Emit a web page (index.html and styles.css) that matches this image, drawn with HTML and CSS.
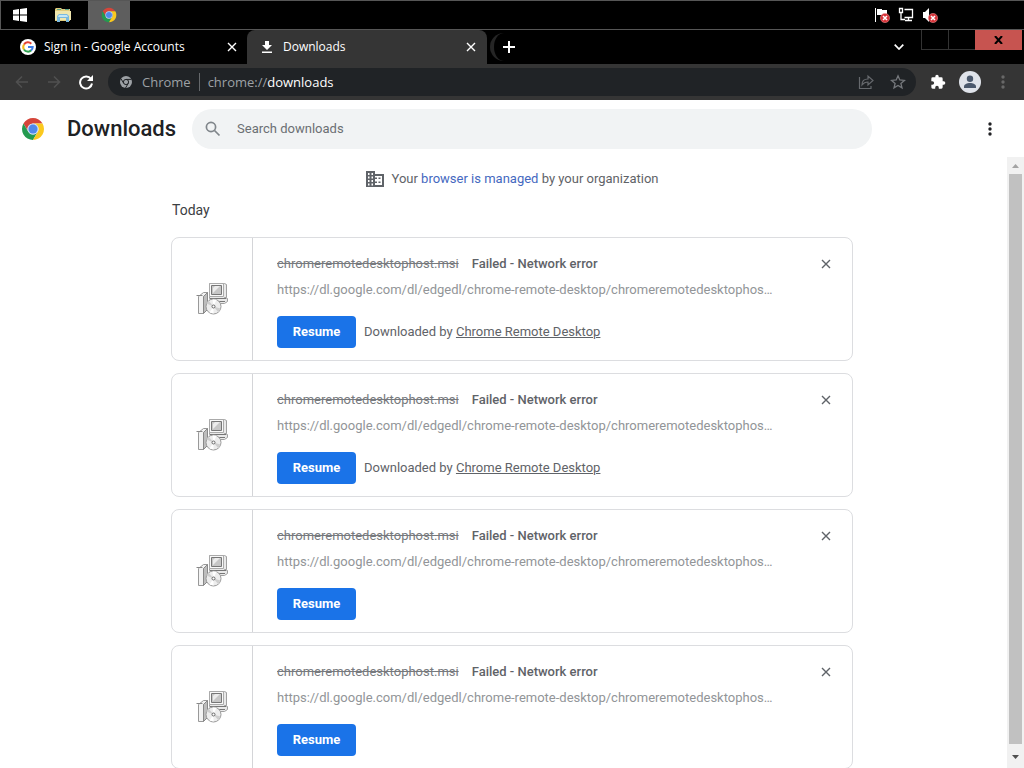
FILE: index.html
```
<!DOCTYPE html>
<html lang="en">
<head>
<meta charset="utf-8">
<title>Downloads</title>
<link rel="stylesheet" href="styles.css">
</head>
<body>
<svg class="defs" aria-hidden="true">
  <symbol id="chrome" viewBox="0 0 48 48">
    <path fill="#d5453a" d="M4.95 13A22 22 0 0 1 43.05 13L24 13A11 11 0 0 0 14.47 29.5Z"/>
    <path fill="#249a50" d="M4.95 13L14.47 29.5A11 11 0 0 0 33.53 29.5L24 46A22 22 0 0 1 4.95 13Z"/>
    <path fill="#fbc91f" d="M43.05 13A22 22 0 0 1 24 46L33.53 29.5A11 11 0 0 0 24 13Z"/>
    <circle cx="24" cy="24" r="11" fill="#c9d8f5"/>
    <circle cx="24" cy="24" r="9" fill="#5089ea"/>
  </symbol>
  <symbol id="close" viewBox="0 0 10 10">
    <path d="M1 1L9 9M9 1L1 9" fill="none" stroke="currentColor" stroke-width="1.4"/>
  </symbol>
  <symbol id="dots" viewBox="0 0 4 14">
    <circle cx="2" cy="2" r="1.7"/><circle cx="2" cy="7" r="1.7"/><circle cx="2" cy="12" r="1.7"/>
  </symbol>
  <symbol id="muted" viewBox="0 0 10 10">
    <circle cx="5" cy="5" r="4.6" fill="#d8343a" stroke="#e98a8c" stroke-width=".6"/>
    <path d="M3 3L7 7M7 3L3 7" stroke="#fff" stroke-width="1.5"/>
  </symbol>
  <symbol id="installer" viewBox="0 0 32 34">
    <path fill="#e9e9e9" stroke="#a0a0a0" d="M13.500 1.500h15l2 1v13h-2l3 1v3l-3 2h-12l-3-5z"/>
    <path fill="#f8f8f8" stroke="#aaa" d="M13.500 1.500h14v13h-14z"/>
    <path fill="#c6c6c6" stroke="#777" d="M15.500 3.500h10v9h-10z"/>
    <path fill="#ececec" d="M17 11l7-7h-5l-2 2z"/>
    <path stroke="#777" d="M14 16.500h16M22 19.500h7"/>
    <path fill="#f3f3f3" stroke="#999" d="M2.500 14.500l5-4h4l-4 4v17h-5z"/>
    <path fill="#bdbdbd" stroke="#888" d="M7.500 14.500l4-4v17l-4 4z"/>
    <path fill="none" stroke="#888" d="M.5 13.500h6"/>
    <circle cx="17.500" cy="24.500" r="7.500" fill="#ededed" stroke="#9a9a9a"/>
    <path fill="#cecece" d="M17.500 24.500l-7-3 2-3zM17.500 24.500l7 2-2 4z"/>
    <path fill="#fff" d="M17.500 24.500l-1-7h4zM17.500 24.500l-4 6 4 1z"/>
    <circle cx="17.500" cy="24.500" r="1.500" fill="#fff" stroke="#666"/>
  </symbol>
</svg>

<header class="taskbar">
  <button class="task" aria-label="Start">
    <svg width="14" height="14" viewBox="0 0 14 14" fill="#fff"><path d="M0 2l6-.9V6.500H0zM7 1l7-1v6.500H7zM0 7.500h6v5.400L0 12zM7 7.500h7V14l-7-1z"/></svg>
  </button>
  <button class="task" aria-label="File Explorer">
    <svg width="18" height="16" viewBox="0 0 18 16">
      <path fill="#e0cb7c" d="M1 2l1-1h5l1 1h8v12H1z"/>
      <path fill="#58a48c" d="M3 2h4v1H3zM11 2h4v1h-4z"/>
      <path fill="#efe6ae" d="M1 4h16v9H1z"/>
      <path fill="#79b9df" d="M3 15V9l2-2h8l2 2v6h-3v-4H6v4z"/>
      <path fill="#c4e6f6" d="M5 8h8l1 2H4z"/>
    </svg>
  </button>
  <button class="task task-active" aria-label="Google Chrome"><svg width="16" height="16"><use href="#chrome"/></svg></button>
  <div class="tray">
    <svg width="16" height="16" viewBox="0 0 16 16"><path fill="#fff" d="M1 1h1v14H1zM3 2h5v1h5v6H8V8H3z"/><use href="#muted" x="6" y="6" width="10" height="10"/></svg>
    <svg width="16" height="16" viewBox="0 0 16 16" fill="none" stroke="#fff"><path d="M1.500 1.500h3v4h-3zM3 6v6.500h4M6.500 2.500h8v8h-8M10.500 11v2M7 13.500h7" stroke-width="1.300"/></svg>
    <svg width="16" height="16" viewBox="0 0 16 16"><path fill="#fff" d="M1 5h2l4-4v14l-4-4H1z"/><use href="#muted" x="6" y="6" width="10" height="10"/></svg>
  </div>
</header>

<div class="tabstrip">
  <div class="tab">
    <svg width="16" height="16" viewBox="0 0 16 16"><circle cx="8" cy="8" r="8" fill="#fff"/><g fill="none" stroke-width="2"><path stroke="#e34133" d="M4 5.500A4.700 4.700 0 0 1 11.300 4.700"/><path stroke="#f5b916" d="M4 5.400A5 5 0 0 0 4 10.600"/><path stroke="#2fa150" d="M4 10.400A4.700 4.700 0 0 0 11.300 11.300"/><path stroke="#3f7de8" d="M8 8h4.700A4.700 4.700 0 0 1 11.100 11.500"/></g></svg>
    <span class="tab-title">Sign in - Google Accounts</span>
    <button class="icon-btn" aria-label="Close tab"><svg width="10" height="10"><use href="#close"/></svg></button>
  </div>
  <div class="tab tab-current">
    <svg width="16" height="16" viewBox="0 0 16 16" fill="#fff"><path d="M6 2h4v4h3L8 11 3 6h3zM3 12.500h10V14H3z"/></svg>
    <span class="tab-title">Downloads</span>
    <button class="icon-btn" aria-label="Close tab"><svg width="10" height="10"><use href="#close"/></svg></button>
  </div>
  <button class="new-tab" aria-label="New tab"><svg width="12" height="12" viewBox="0 0 12 12"><path d="M6 0v12M0 6h12" stroke="#fff" stroke-width="2"/></svg></button>
  <button class="icon-btn tab-search" aria-label="Search tabs"><svg width="10" height="6" viewBox="0 0 10 6" fill="none" stroke="#fff" stroke-width="1.700"><path d="M.7.7L5 5 9.300.7"/></svg></button>
  <div class="window-controls">
    <button aria-label="Minimize"></button>
    <button aria-label="Maximize"></button>
    <button class="window-close" aria-label="Close"><svg width="9" height="8" viewBox="0 0 9 8"><path d="M1 0L8 8M8 0L1 8" stroke="#000" stroke-width="2"/></svg></button>
  </div>
</div>

<nav class="toolbar">
  <button class="icon-btn nav-btn" aria-label="Back"><svg width="14" height="14" viewBox="0 0 14 14" fill="none" stroke="#505050" stroke-width="1.600"><path d="M13 7H2M7 1.500L1.500 7 7 12.500"/></svg></button>
  <button class="icon-btn nav-btn" aria-label="Forward"><svg width="14" height="14" viewBox="0 0 14 14" fill="none" stroke="#505050" stroke-width="1.600"><path d="M1 7h11M7 1.500L12.500 7 7 12.500"/></svg></button>
  <button class="icon-btn nav-btn" aria-label="Reload"><svg width="16" height="16" viewBox="0 0 16 16"><path d="M13 5A6 6 0 1 0 14 9.500" fill="none" stroke="#fff" stroke-width="2"/><path d="M15 1v6H9z" fill="#fff"/></svg></button>
  <div class="omnibox">
    <svg width="12" height="12" viewBox="0 0 12 12"><circle cx="6" cy="6" r="6" fill="#9da1a5"/><circle cx="6" cy="6" r="2.600" fill="none" stroke="#202326"/><path d="M6 3.400h5.500M3.700 7.300L1 2.800M8.300 7.300L5.500 12" stroke="#202326"/></svg>
    <span class="origin">Chrome</span>
    <span class="url">chrome://<b>downloads</b></span>
    <button class="icon-btn" aria-label="Share"><svg width="16" height="16" viewBox="0 0 16 16" fill="none" stroke="#66696d" stroke-width="1.200"><path d="M1.500 3v11.500H13V12M4 11c0-4 2-6 6-6V2l5 4.500-5 4.500V8C7 8 5.500 9 4 11z"/></svg></button>
    <button class="icon-btn" aria-label="Bookmark"><svg width="16" height="16" viewBox="0 0 16 16" fill="none" stroke="#75787c" stroke-width="1.300"><path d="M8 1.800l1.800 4.200 4.600.4-3.500 3 1.100 4.500L8 11.500l-4 2.400 1.100-4.500-3.500-3 4.600-.4z"/></svg></button>
  </div>
  <button class="icon-btn" aria-label="Extensions"><svg width="16" height="16" viewBox="0 0 24 24" fill="#fff"><path d="M20.500 11H19V7a2 2 0 0 0-2-2h-4V3.500a2.500 2.500 0 0 0-5 0V5H4a2 2 0 0 0-2 2v3.800h1.500a2.700 2.700 0 0 1 0 5.400H2V20a2 2 0 0 0 2 2h3.800v-1.500a2.700 2.700 0 0 1 5.400 0V22H17a2 2 0 0 0 2-2v-4h1.500a2.500 2.500 0 0 0 0-5z"/></svg></button>
  <button class="icon-btn" aria-label="Profile"><svg width="22" height="22" viewBox="0 0 22 22"><circle cx="11" cy="11" r="11" fill="#dfe3ea"/><circle cx="11" cy="7.700" r="3.200" fill="#4b596d"/><path d="M5 17v-1.500c0-2.300 3-3.500 6-3.500s6 1.200 6 3.500V17z" fill="#4b596d"/></svg></button>
  <button class="icon-btn toolbar-menu" aria-label="Menu"><svg width="4" height="14"><use href="#dots"/></svg></button>
</nav>

<main class="page">
  <div class="page-header">
    <svg width="24" height="24"><use href="#chrome"/></svg>
    <h1>Downloads</h1>
    <label class="search">
      <svg width="16" height="16" viewBox="0 0 16 16" fill="none" stroke="#80868b" stroke-width="1.700"><circle cx="6" cy="6" r="4.600"/><path d="M9.500 9.500l5 5"/></svg>
      <input type="search" placeholder="Search downloads" aria-label="Search downloads">
    </label>
    <button class="icon-btn more" aria-label="More actions"><svg width="4" height="14"><use href="#dots"/></svg></button>
  </div>

  <div class="scroll-area">
    <div class="content">
      <p class="managed">
        <svg width="18" height="16" viewBox="0 0 18 16"><path fill="#5f6368" d="M0 0h9v3h9v13H0z"/><path fill="#fff" d="M2 2h1.500v2H2zM5.500 2H7v2H5.500zM2 5.500h1.500v2H2zM5.500 5.500H7v2H5.500zM2 9h1.500v2H2zM5.500 9H7v2H5.500zM2 12.500h1.500v2H2zM5.500 12.500H7v2H5.500zM9 5h7v9H9z"/><path fill="#5f6368" d="M9 6.500h2V8H9zM12.500 6.500h2V8h-2zM9 10.500h2V12H9zM12.500 10.500h2V12h-2z"/></svg>
        <span>Your <a href="#">browser is managed</a> by your organization</span>
      </p>
      <h2>Today</h2>
      <article class="card">
        <div class="file-icon"><svg width="32" height="34"><use href="#installer"/></svg></div>
        <div class="details">
          <div class="title"><s>chromeremotedesktophost.msi</s><strong>Failed - Network error</strong></div>
          <div class="source">https://dl.google.com/dl/edgedl/chrome-remote-desktop/chromeremotedesktophos…</div>
          <div class="actions"><button class="resume">Resume</button><span>Downloaded by <a href="#">Chrome Remote Desktop</a></span></div>
        </div>
        <button class="icon-btn remove" aria-label="Remove from list"><svg width="10" height="10"><use href="#close"/></svg></button>
      </article>
      <article class="card">
        <div class="file-icon"><svg width="32" height="34"><use href="#installer"/></svg></div>
        <div class="details">
          <div class="title"><s>chromeremotedesktophost.msi</s><strong>Failed - Network error</strong></div>
          <div class="source">https://dl.google.com/dl/edgedl/chrome-remote-desktop/chromeremotedesktophos…</div>
          <div class="actions"><button class="resume">Resume</button><span>Downloaded by <a href="#">Chrome Remote Desktop</a></span></div>
        </div>
        <button class="icon-btn remove" aria-label="Remove from list"><svg width="10" height="10"><use href="#close"/></svg></button>
      </article>
      <article class="card">
        <div class="file-icon"><svg width="32" height="34"><use href="#installer"/></svg></div>
        <div class="details">
          <div class="title"><s>chromeremotedesktophost.msi</s><strong>Failed - Network error</strong></div>
          <div class="source">https://dl.google.com/dl/edgedl/chrome-remote-desktop/chromeremotedesktophos…</div>
          <div class="actions"><button class="resume">Resume</button></div>
        </div>
        <button class="icon-btn remove" aria-label="Remove from list"><svg width="10" height="10"><use href="#close"/></svg></button>
      </article>
      <article class="card">
        <div class="file-icon"><svg width="32" height="34"><use href="#installer"/></svg></div>
        <div class="details">
          <div class="title"><s>chromeremotedesktophost.msi</s><strong>Failed - Network error</strong></div>
          <div class="source">https://dl.google.com/dl/edgedl/chrome-remote-desktop/chromeremotedesktophos…</div>
          <div class="actions"><button class="resume">Resume</button></div>
        </div>
        <button class="icon-btn remove" aria-label="Remove from list"><svg width="10" height="10"><use href="#close"/></svg></button>
      </article>
    </div>
    <div class="scrollbar" aria-hidden="true">
      <svg width="17" height="17" viewBox="0 0 17 17"><path d="M5 11l3.500-4 3.500 4z" fill="#a3a3a3"/></svg>
      <div class="thumb"></div>
      <svg class="arrow-down" width="17" height="17" viewBox="0 0 17 17"><path d="M5 7h7l-3.500 4z" fill="#505050"/></svg>
    </div>
  </div>
</main>
</body>
</html>
```

FILE: styles.css
```
* { box-sizing: border-box; }

body {
  margin: 0;
  height: 100vh;
  display: flex;
  flex-direction: column;
  overflow: hidden;
  background: #fff;
  color: #5f6368;
  font: 13px/20px Roboto, sans-serif;
}

svg { display: block; flex: none; }
.defs { position: absolute; width: 0; height: 0; }

button {
  border: 0;
  padding: 0;
  background: none;
  font: inherit;
}

.icon-btn {
  display: grid;
  place-items: center;
  flex: none;
  color: inherit;
}

/* Taskbar */
.taskbar {
  flex: none;
  display: flex;
  height: 30px;
  background: #000;
  border: 1px solid #565656;
  border-right: 0;
}
.task {
  width: 44px;
  display: grid;
  place-items: center;
}
.task:first-child { width: 37px; }
.task:nth-child(2) { width: 50px; }
.task-active { width: 42px; background: #5e5e5e; }
.tray {
  display: flex;
  align-items: center;
  gap: 8px;
  margin-left: auto;
  margin-right: 86px;
}

/* Tab strip */
.tabstrip {
  flex: none;
  display: flex;
  align-items: center;
  height: 34px;
  background: #000;
  color: #fff;
  font: 12px/16px "Open Sans", sans-serif;
}
.tab {
  flex: 0 1 247px;
  display: flex;
  align-items: center;
  gap: 8px;
  height: 34px;
  padding: 0 10px 0 20px;
}
.tab-current {
  flex-basis: 240px;
  padding: 0 11px 0 12px;
  border-radius: 8px 8px 0 0;
  background: #353535;
}
.tab-title { flex: 1; white-space: nowrap; }
.new-tab {
  display: grid;
  place-items: center;
  width: 34px;
  height: 28px;
  margin-left: 3px;
  border-left: 4px solid #252525;
  border-radius: 14px;
}
.tab-search { margin: 0 17px 0 auto; }
.window-controls {
  display: flex;
  align-self: flex-start;
  height: 20px;
  margin-right: 2px;
}
.window-controls button {
  width: 27px;
  border: 1px solid #333;
  border-top: 0;
  border-right: 0;
}
.window-controls .window-close {
  display: grid;
  place-items: center;
  width: 47px;
  border: 0;
  background: #c75450;
}

/* Toolbar */
.toolbar {
  flex: none;
  display: flex;
  align-items: center;
  height: 36px;
  padding-left: 6px;
  background: #353535;
}
.nav-btn { width: 32px; }
.omnibox {
  flex: 1;
  display: flex;
  align-items: center;
  height: 28px;
  margin: 0 14px 0 6px;
  padding: 0 10px 0 12px;
  border-radius: 14px;
  background: #202326;
  color: #9da1a5;
  font: 13px/18px "Open Sans", sans-serif;
}
.origin {
  margin-left: 10px;
  padding-right: 8px;
  border-right: 1px solid #65686b;
}
.url { flex: 1; padding-left: 8px; }
.url b { color: #fff; font-weight: 400; }
.omnibox .icon-btn + .icon-btn { margin-left: 16px; }
.omnibox + .icon-btn { margin-right: 13px; }
.toolbar .toolbar-menu { width: 43px; fill: #686868; }

/* Downloads page */
.page {
  flex: 1;
  min-height: 0;
  display: flex;
  flex-direction: column;
}
.page-header {
  flex: none;
  display: flex;
  align-items: center;
  height: 57px;
  padding: 0 32px 0 21px;
}
h1 {
  margin: 0 16px 0 22px;
  color: #202124;
  font-size: 22px;
  line-height: 28px;
  font-weight: 500;
}
.search {
  flex: 0 1 680px;
  display: flex;
  align-items: center;
  gap: 16px;
  height: 40px;
  padding: 0 13px;
  border-radius: 20px;
  background: #f1f3f4;
}
.search input {
  flex: 1;
  min-width: 0;
  border: 0;
  padding: 0;
  outline: 0;
  background: none;
  font: inherit;
}
.search input::placeholder { color: #6b6f73; opacity: 1; }
.more { margin-left: auto; fill: #202124; }

.scroll-area {
  flex: 1;
  min-height: 0;
  display: flex;
}
.content {
  flex: 1;
  min-width: 0;
  overflow: hidden;
  padding: 12px 0 0 17px;
}
.managed {
  display: flex;
  justify-content: center;
  gap: 8px;
  margin: 0;
}
.managed svg { margin-top: 2px; }
.managed a { color: #4468c0; text-decoration: none; }
h2, .card { width: min(682px, 100%); margin: 0 auto; }
h2 {
  padding: 11px 1px 17px;
  color: #3c4043;
  font-size: 14px;
  line-height: 20px;
  font-weight: 400;
}
.card {
  display: flex;
  min-height: 124px;
  border: 1px solid #dcdde0;
  border-radius: 8px;
}
.card + .card { margin-top: 12px; }
.file-icon {
  display: grid;
  place-items: center;
  width: 81px;
  border-right: 1px solid #d4d5d8;
}
.details {
  flex: 1;
  min-width: 0;
  padding: 16px 0 12px 24px;
}
.title { display: flex; gap: 13px; }
.title s { color: #777a7e; }
.title strong { font-weight: 500; }
.source {
  margin-top: 6px;
  overflow: hidden;
  text-overflow: ellipsis;
  white-space: nowrap;
  color: #929598;
}
.actions {
  display: flex;
  align-items: center;
  gap: 8px;
  margin-top: 16px;
}
.actions a { color: inherit; }
.resume {
  width: 79px;
  height: 32px;
  border-radius: 4px;
  background: #1a73e8;
  color: #fff;
  font-weight: 700;
}
.remove {
  width: 32px;
  height: 32px;
  margin: 10px 10px 0 28px;
}

.scrollbar {
  flex: none;
  display: flex;
  flex-direction: column;
  width: 17px;
  background: #f1f1f1;
}
.thumb {
  flex: 1;
  margin: 0 2px;
  background: #c1c1c1;
}
.arrow-down { margin: 4px 0 3px; }
```
